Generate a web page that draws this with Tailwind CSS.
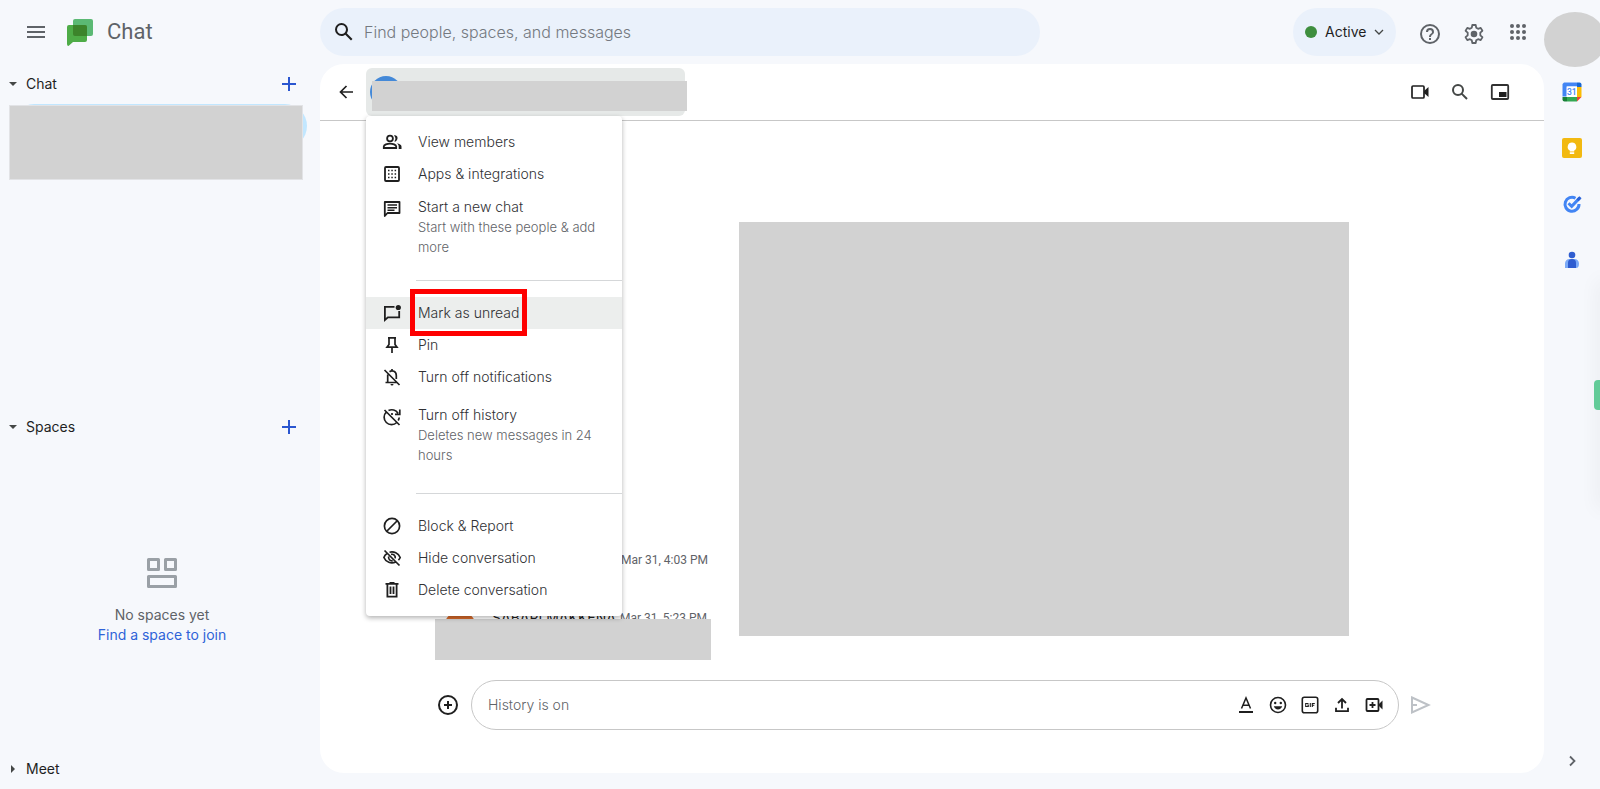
<!DOCTYPE html>
<html lang="en">
<head>
<meta charset="utf-8">
<title>Chat</title>
<script src="https://cdn.jsdelivr.net/npm/@tailwindcss/browser@4"></script>
</head>
<body class="bg-[#f6f8fc] font-['Inter',sans-serif] text-[#1f1f1f] text-sm">
<div class="relative flex flex-col min-h-screen overflow-hidden">

  <header class="flex items-center h-16 shrink-0">
    <div class="flex items-center w-80 shrink-0 pl-6">
      <button aria-label="Main menu" class="size-6"><svg viewBox="0 0 24 24" class="size-6" fill="#5f6368"><path d="M3 18h18v-2H3v2zm0-5h18v-2H3v2zm0-7v2h18V6H3z"/></svg></button>
      <svg viewBox="0 0 26 27" class="w-[26px] h-[27px] ml-[19px]"><rect x="6" width="20" height="17" rx="2" fill="#5bb974"/><path d="M2 6h16a2 2 0 0 1 2 2v13a2 2 0 0 1-2 2H6l-4.500 4Q0 27 0 25V8a2 2 0 0 1 2-2z" fill="#4eac47"/><path d="M6 6h12a2 2 0 0 1 2 2v9H8a2 2 0 0 1-2-2z" fill="#3c842b"/></svg>
      <span class="ml-[14px] font-['Roboto',sans-serif] text-[22px] leading-7 text-[#5f6368]">Chat</span>
    </div>
    <label class="flex items-center w-[720px] h-12 rounded-full bg-[#eaf1fb] pl-3">
      <svg viewBox="0 0 24 24" class="size-6 shrink-0" fill="#1f1f1f"><path d="M20.490 19l-5.730-5.730C15.530 12.200 16 10.910 16 9.500A6.500 6.500 0 1 0 9.500 16c1.410 0 2.700-.47 3.770-1.240L19 20.490 20.490 19zM5 9.500C5 7.010 7.010 5 9.500 5S14 7.010 14 9.500 11.990 14 9.500 14 5 11.990 5 9.500z"/></svg>
      <input type="text" aria-label="Search" placeholder="Find people, spaces, and messages" class="flex-1 ml-2 text-base font-light bg-transparent outline-none placeholder:text-[#747980]">
    </label>
    <button class="flex items-center ml-auto w-[103px] h-12 rounded-full bg-[#eaf1fb] pl-3 shrink-0">
      <span class="size-3 rounded-full bg-[#3e8e3e]"></span>
      <span class="ml-2 text-sm">Active</span>
      <svg viewBox="0 0 10 10" class="size-[10px] ml-2" fill="none" stroke="#444746" stroke-width="1.300"><path d="M1 3l4 4 4-4"/></svg>
    </button>
    <button aria-label="Support" class="ml-[22px] mt-1 size-6 shrink-0"><svg viewBox="0 0 24 24" class="size-6" fill="#5f6368"><path d="M11 18h2v-2h-2v2zm1-16a10 10 0 1 0 0 20 10 10 0 0 0 0-20zm0 18a8 8 0 1 1 0-16 8 8 0 0 1 0 16zm0-14a4 4 0 0 0-4 4h2a2 2 0 1 1 4 0c0 2-3 1.750-3 5h2c0-2.250 3-2.500 3-5a4 4 0 0 0-4-4z"/></svg></button>
    <button aria-label="Settings" class="ml-5 mt-1 size-6 shrink-0"><svg viewBox="0 0 24 24" class="size-6" fill="none" stroke="#5f6368" stroke-width="1.800" stroke-linejoin="round"><path d="M10.300 3h3.400l.5 2.700 1.900 1.100 2.600-.9 1.700 2.900-2.100 1.900v2.600l2.100 1.900-1.700 2.900-2.600-.9-1.900 1.100-.5 2.700h-3.400l-.5-2.700-1.900-1.100-2.600.9-1.700-2.900 2.100-1.900v-2.600L3.600 8.800l1.700-2.900 2.600.9 1.900-1.100z"/><circle cx="12" cy="12" r="3.300" fill="#5f6368" stroke="none"/></svg></button>
    <button aria-label="Google apps" class="ml-5 size-6 shrink-0"><svg viewBox="0 0 24 24" class="size-6" fill="#5f6368"><circle cx="6" cy="6" r="2"/><circle cx="12" cy="6" r="2"/><circle cx="18" cy="6" r="2"/><circle cx="6" cy="12" r="2"/><circle cx="12" cy="12" r="2"/><circle cx="18" cy="12" r="2"/><circle cx="6" cy="18" r="2"/><circle cx="12" cy="18" r="2"/><circle cx="18" cy="18" r="2"/></svg></button>
    <span class="ml-[14px] -mr-[6px] mt-[15px] w-[62px] h-[55px] shrink-0 rounded-[50%] bg-[#d2d2d2]"></span>
  </header>

  <div class="flex flex-1">
    <nav class="flex flex-col w-80 shrink-0">
      <section class="relative flex-1">
        <div class="flex items-center h-10 pl-[9px] pr-5">
          <svg viewBox="0 0 8 4" class="w-2 h-1" fill="#444746"><path d="M0 0h8L4 4z"/></svg>
          <h2 class="ml-[9px]">Chat</h2>
          <button aria-label="Start a chat" class="ml-auto size-[22px]"><svg viewBox="0 0 22 22" class="size-[22px]" stroke="#2a56d0" stroke-width="2"><path d="M4 11h14M11 4v14"/></svg></button>
        </div>
        <div class="ml-3 mr-[13px] h-11 rounded-full bg-[#c2e7ff]"></div>
        <div class="absolute left-[9px] top-[41px] w-[294px] h-[75px] bg-[#d2d2d2] border border-[#e2e3e6]"></div>
      </section>
      <section class="flex flex-col flex-1">
        <div class="flex items-center h-10 pl-[9px] pr-5">
          <svg viewBox="0 0 8 4" class="w-2 h-1" fill="#444746"><path d="M0 0h8L4 4z"/></svg>
          <h2 class="ml-[9px]">Spaces</h2>
          <button aria-label="Create a space" class="ml-auto size-[22px]"><svg viewBox="0 0 22 22" class="size-[22px]" stroke="#2a56d0" stroke-width="2"><path d="M4 11h14M11 4v14"/></svg></button>
        </div>
        <div class="flex flex-col flex-1 items-center justify-center pt-[7px] pl-1 leading-5">
          <svg viewBox="0 0 30 30" class="size-[30px] mb-[17px]" fill="none" stroke="#9aa0a6" stroke-width="3" stroke-linejoin="round"><path d="M1.500 1.500h10v10h-10zM18.500 1.500h10v10h-10zM1.500 18.500h27v10h-27z"/></svg>
          <p class="text-[#5f6368]">No spaces yet</p>
          <a href="#" class="text-[#2f63d8]">Find a space to join</a>
        </div>
      </section>
      <section class="flex items-center h-10 pl-[11px]">
        <svg viewBox="0 0 4 8" class="w-1 h-2" fill="#444746"><path d="M0 0v8l4-4z"/></svg>
        <h2 class="ml-[11px]">Meet</h2>
      </section>
    </nav>

    <main class="relative flex flex-col flex-1 mb-4 rounded-3xl bg-white">
      <div class="flex items-center h-[57px] pl-[14px] pr-8 border-b border-[#c7c7c7]">
        <button aria-label="Back" class="size-6"><svg viewBox="0 0 24 24" class="size-6" fill="none" stroke="#1f1f1f" stroke-width="1.700"><path d="M19 12H6.500M12.500 6l-6 6 6 6"/></svg></button>
        <button aria-label="Conversation options" class="relative ml-2 w-[319px] h-12 rounded-md bg-[#e6e9e8]">
          <span class="absolute left-1 top-2 size-8 rounded-full bg-[#4489d8]"></span>
          <span class="absolute left-[6px] top-[13px] w-[315px] h-[30px] bg-[#d2d2d2]"></span>
        </button>
        <div class="flex gap-4 ml-auto">
          <button aria-label="Start a video call" class="size-6"><svg viewBox="0 0 24 24" class="size-6"><rect x="4" y="6" width="12" height="12" rx="1" fill="none" stroke="#1f1f1f" stroke-width="1.700"/><path d="M16 11l4.500-4v10L16 13z" fill="#1f1f1f"/></svg></button>
          <button aria-label="Search in chat" class="size-6"><svg viewBox="0 0 24 24" class="size-6" fill="none" stroke="#444746" stroke-width="2"><circle cx="10" cy="10" r="5"/><path d="M13.600 13.600l5.400 5.400"/></svg></button>
          <button aria-label="Open in pop-up" class="size-6"><svg viewBox="0 0 24 24" class="size-6"><rect x="3.800" y="5" width="16.400" height="14" rx="1" fill="none" stroke="#303030" stroke-width="1.800"/><path d="M11 12h7.500v5H11z" fill="#1f1f1f"/></svg></button>
        </div>
      </div>

      <div class="relative flex-1">
        <time class="absolute left-[301px] top-[429px] font-['Roboto',sans-serif] text-xs leading-5 text-[#5f6368] whitespace-nowrap">Mar 31, 4:03 PM</time>
        <div class="absolute left-[124px] top-[487px] flex whitespace-nowrap">
          <span class="w-8 h-8 mt-[3px] rounded-full bg-[#d5692a] text-white text-center text-lg leading-8">S</span>
          <span class="ml-4 w-32 text-sm leading-5">SABARI MAKKENA</span>
          <time class="font-['Roboto',sans-serif] text-xs leading-5 text-[#5f6368]">Mar 31, 5:23 PM</time>
        </div>
        <div class="absolute left-[115px] top-[498px] w-[276px] h-[41px] bg-[#d2d2d2]"></div>
        <div class="absolute left-[419px] top-[101px] w-[610px] h-[414px] bg-[#d2d2d2]"></div>
      </div>

      <form class="flex items-center pl-[116px] pr-[112px] pb-[43px]">
        <button type="button" aria-label="Add" class="size-6"><svg viewBox="0 0 24 24" class="size-6" fill="none" stroke="#1f1f1f" stroke-width="2"><circle cx="12" cy="12" r="9"/><path d="M8 12h8M12 8v8"/></svg></button>
        <div class="flex flex-1 items-center h-[50px] ml-[11px] pl-4 pr-3 gap-2 rounded-full border border-[#c7c7c7]">
          <input type="text" aria-label="Message" placeholder="History is on" class="flex-1 font-light outline-none placeholder:text-[#5f6368]">
          <button type="button" aria-label="Format" class="size-6"><svg viewBox="0 0 24 24" class="size-6" fill="none" stroke="#1f1f1f"><path d="M5 19h14" stroke-width="2"/><path d="M7.500 15.500L12 5l4.500 10.500M9 12.300h6" stroke-width="1.500"/></svg></button>
          <button type="button" aria-label="Emoji" class="size-6"><svg viewBox="0 0 24 24" class="size-6" fill="#1f1f1f"><circle cx="12" cy="12" r="7.500" fill="none" stroke="#1f1f1f" stroke-width="1.600"/><circle cx="9.200" cy="10" r="1.200"/><circle cx="14.800" cy="10" r="1.200"/><path d="M7.800 13.300h8.400a4.400 4.400 0 0 1-8.400 0z"/></svg></button>
          <button type="button" aria-label="GIF" class="size-6"><svg viewBox="0 0 24 24" class="size-6" fill="none" stroke="#1f1f1f"><rect x="4.300" y="4.300" width="15.400" height="15.400" rx="2" stroke-width="1.600"/><path d="M10.500 10.500H7.700v3h2.600v-1.500H9.300M12.300 10v4M14.300 14v-3.500h2.500M14.300 12.300h2" stroke-width="1.100"/></svg></button>
          <button type="button" aria-label="Upload" class="size-6"><svg viewBox="0 0 24 24" class="size-6" fill="none" stroke="#1f1f1f" stroke-width="1.800"><path d="M12 15.500V6.500M8 10l4-4 4 4M6 14.800v3.400h12v-3.400"/></svg></button>
          <button type="button" aria-label="Add video meeting" class="size-6"><svg viewBox="0 0 24 24" class="size-6" fill="none" stroke="#1f1f1f" stroke-width="1.800"><rect x="4.500" y="6" width="12" height="12" rx="1"/><path d="M7.500 12h6M10.500 9v6"/><path d="M17 11l3.500-3.500v9L17 13z" fill="#1f1f1f" stroke="none"/></svg></button>
        </div>
        <button aria-label="Send" class="ml-[9px] size-6"><svg viewBox="0 0 24 24" class="size-6" fill="none" stroke="#bdc1c6" stroke-width="2"><path d="M4 4.500L20.500 12 4 19.500zM4 12h5"/></svg></button>
      </form>

      <div role="menu" class="absolute left-[46px] top-[52px] w-64 pt-[10px] pb-[10px] rounded bg-white shadow-[0_2px_5px_rgba(0,0,0,.3)] font-light text-[#303134]">
        <button role="menuitem" class="flex items-center w-full h-8 pl-[14px] gap-[14px]"><svg viewBox="0 0 24 24" class="size-6" fill="none" stroke="#1f1f1f" stroke-width="1.800"><circle cx="10" cy="8.500" r="2.900"/><path d="M3.800 18v-1.500c0-1.700 3.500-2.900 6.200-2.900s6.200 1.200 6.200 2.900V18z"/><path d="M14 5.500c3.500-1 5 3.500 1.700 5.900h-1.500c1.700-1.700 1.700-4-.2-5.900zM17 13.200c2.300.5 4.500 1.500 4.500 3.300V19h-2.800v-2.500c0-1.300-.7-2.400-1.700-3.300z" fill="#1f1f1f" stroke="none"/></svg>View members</button>
        <button role="menuitem" class="flex items-center w-full h-8 pl-[14px] gap-[14px]"><svg viewBox="0 0 24 24" class="size-6" fill="none" stroke="#1f1f1f"><rect x="5" y="5" width="14" height="14" rx="1" stroke-width="1.800"/><path d="M8 8.500h9M8 12h9M8 15.500h9" stroke-width="1.500" stroke-dasharray="1.500 1.800"/></svg>Apps &amp; integrations</button>
        <button role="menuitem" class="flex w-full pt-[7px] pl-[14px] gap-[14px] text-left leading-5"><svg viewBox="0 0 24 24" class="size-6 shrink-0" fill="none" stroke="#1f1f1f"><path d="M4.800 19V5h14.700v11H7.500z" stroke-width="1.800" stroke-linejoin="round"/><path d="M7.500 8h9.500M7.500 10.700h9.500M7.500 13.300h7" stroke-width="1.400"/></svg><span>Start a new chat<span class="block text-[13px] leading-5 text-[#5f6368]">Start with these people &amp; add more</span></span></button>
        <hr class="mt-[23px] ml-[50px] mb-4 border-[#d5d7d9]">
        <button role="menuitem" class="relative flex items-center w-full h-8 pl-[14px] gap-[14px] bg-[#eceeed]"><svg viewBox="0 0 24 24" class="size-6" fill="none" stroke="#1f1f1f" stroke-width="1.800"><path d="M14.500 5.800H4.900V19l3-2.700h11.300V10"/><circle cx="18.300" cy="6.500" r="2.600" fill="#1f1f1f" stroke="none"/></svg>Mark as unread<span class="absolute left-11 -top-2 w-[117px] h-[47px] border-5 border-[#fe0000]"></span></button>
        <button role="menuitem" class="flex items-center w-full h-8 pl-[14px] gap-[14px]"><svg viewBox="0 0 24 24" class="size-6" fill="none" stroke="#1f1f1f" stroke-width="1.700"><path d="M8 4.800h8M9 5v6.500L7 14.200h10L15 11.500V5M12 14.500V20"/></svg>Pin</button>
        <button role="menuitem" class="flex items-center w-full h-8 pl-[14px] gap-[14px]"><svg viewBox="0 0 24 24" class="size-6" fill="none" stroke="#1f1f1f" stroke-width="1.700"><path d="M4.500 5l15 15M5.500 17.500h11M7.700 17.500V9.500M9.500 6.700c2.700-2 6.800-.3 6.800 3.800v3.500M12 6V4"/><path d="M10.500 19h3a1.500 1.500 0 0 1-3 0z" fill="#1f1f1f" stroke="none"/></svg>Turn off notifications</button>
        <button role="menuitem" class="flex w-full pt-3 pl-[14px] gap-[14px] text-left leading-5"><svg viewBox="0 0 24 24" class="size-6 shrink-0" fill="none" stroke="#1f1f1f" stroke-width="1.700"><path d="M4.500 5l15 15M6.300 7a7.300 7.300 0 0 0 10.500 10.500M8.500 5.500a7.400 7.400 0 0 1 9.500 2.700M19.800 4.500v4.800H15M19.200 12.500a7 7 0 0 1-1 3M12 8v2"/></svg><span>Turn off history<span class="block text-[13px] leading-5 text-[#5f6368]">Deletes new messages in 24 hours</span></span></button>
        <hr class="mt-7 ml-[50px] mb-4 border-[#d5d7d9]">
        <button role="menuitem" class="flex items-center w-full h-8 pl-[14px] gap-[14px]"><svg viewBox="0 0 24 24" class="size-6" fill="none" stroke="#1f1f1f" stroke-width="1.700"><circle cx="12" cy="12" r="7.600"/><path d="M17 7L7 17"/></svg>Block &amp; Report</button>
        <button role="menuitem" class="flex items-center w-full h-8 pl-[14px] gap-[14px]"><svg viewBox="0 0 24 24" class="size-6" fill="none" stroke="#1f1f1f" stroke-width="1.700"><path d="M4.500 4.500l15 15M7 7.500C5.500 8.500 4.400 9.900 3.900 11.500c1.900 4.700 7.300 6.600 11.800 4.500M9.500 6.300c4.300-1.200 8.900.9 10.700 5.200-.4 1-1 1.900-1.800 2.700M11 8.400c2.500-.7 4.700 1.300 4.200 4M8.700 10.500c-.7 2.500 1.300 4.700 4 4.200"/></svg>Hide conversation</button>
        <button role="menuitem" class="flex items-center w-full h-8 pl-[14px] gap-[14px]"><svg viewBox="0 0 24 24" class="size-6" fill="none" stroke="#1f1f1f" stroke-width="1.800"><path d="M5.500 5.800h13M9.500 5h5M7.400 6v12.700h9.200V6M10.500 8.500v7.500M13.500 8.500v7.500"/></svg>Delete conversation</button>
      </div>
    </main>

    <aside class="flex flex-col items-center w-14 shrink-0 pt-[18px] pb-[18px] gap-9">
      <button aria-label="Calendar" class="size-5"><svg viewBox="0 0 20 20" class="size-5"><path d="M2 .5h13v4H5v10H.5V2z" fill="#4285f4"/><path d="M15 .5h2.500q2 0 2 2V5H15z" fill="#1967d2"/><path d="M15 5h4.500v10H15z" fill="#fbbc04"/><path d="M5 15h10v4.500H5z" fill="#34a853"/><path d="M.5 15H5v4.500H2.500q-2 0-2-2z" fill="#188038"/><path d="M15 15h4.500L15 19.500z" fill="#ea4335"/><path d="M4.500 4.500H15V15H4.500z" fill="#fff"/><text x="9.800" y="13" text-anchor="middle" font-family="Roboto" font-size="8.500" font-weight="500" fill="#4285f4">31</text></svg></button>
      <button aria-label="Keep" class="size-5"><svg viewBox="0 0 20 20" class="size-5"><rect width="20" height="20" rx="2" fill="#f2b911"/><path d="M10 4.500a4.300 4.300 0 0 0-2.200 8V13.500h4.400v-1a4.300 4.300 0 0 0-2.200-8zM7.800 14.300h4.400v1.700H7.800z" fill="#fff"/></svg></button>
      <button aria-label="Tasks" class="size-5"><svg viewBox="0 0 20 20" class="size-5" fill="none" stroke="#4285f4"><path d="M13.500 4.200A7 7 0 1 0 17 10" stroke-width="3"/><path d="M6.500 9.200l3.200 3.200 8-8.500" stroke-width="3"/><path d="M15.500 6.200l3-3" stroke="#2a62d8" stroke-width="3"/></svg></button>
      <button aria-label="Contacts" class="size-5"><svg viewBox="0 0 20 20" class="size-5"><circle cx="10" cy="5" r="3.300" fill="#2f5dd0"/><path d="M3 18v-4.500a4.500 4.500 0 0 1 4.500-4.500h5a4.500 4.500 0 0 1 4.500 4.500q0 4.500-3 4.500z" fill="#7baaf7"/><path d="M6 18v-5q0-4 4-4t4 4v5z" fill="#2f5dd0"/></svg></button>
      <button aria-label="Hide side panel" class="mt-auto size-5"><svg viewBox="0 0 20 20" class="size-5" fill="none" stroke="#5f6368" stroke-width="1.800"><path d="M8 5.500l4.500 4.500L8 14.500"/></svg></button>
    </aside>
  </div>

  <div class="absolute -right-2 top-[280px] w-2 h-[230px] shadow-[0_0_20px_rgba(0,0,0,.09)]"></div>
  <div class="absolute right-0 top-[380px] w-[6px] h-[30px] rounded-l bg-[#62cb98]"></div>
</div>
</body>
</html>
